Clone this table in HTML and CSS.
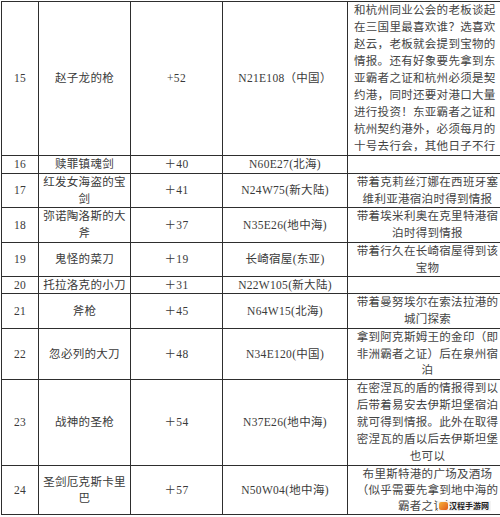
FILE: index.html
```html
<!DOCTYPE html>
<html lang="zh">
<head>
<meta charset="utf-8">
<link rel="stylesheet" href="styles.css">
</head>
<body>
<table class="grid">
  <colgroup>
    <col class="c-no"><col class="c-name"><col class="c-atk"><col class="c-pos"><col class="c-desc">
  </colgroup>
  <tr>
    <td>15</td><td>赵子龙的枪</td><td>+52</td><td>N21E108（中国）</td>
    <td class="desc left">和杭州同业公会的老板谈起<br>在三国里最喜欢谁？选喜欢<br>赵云，老板就会提到宝物的<br>情报。还有好象要先拿到东<br>亚霸者之证和杭州必须是契<br>约港，同时还要对港口大量<br>进行投资！东亚霸者之证和<br>杭州契约港外，必须每月的<br>十号去行会，其他日子不行</td>
  </tr>
  <tr>
    <td>16</td><td>赎罪镇魂剑</td><td>＋40</td><td>N60E27(北海)</td><td class="desc"></td>
  </tr>
  <tr class="tight">
    <td>17</td><td>红发女海盗的宝<br>剑</td><td>＋41</td><td>N24W75(新大陆)</td>
    <td class="desc">带着克莉丝汀娜在西班牙塞<br>维利亚港宿泊时得到情报</td>
  </tr>
  <tr>
    <td>18</td><td>弥诺陶洛斯的大<br>斧</td><td>＋37</td><td>N35E26(地中海)</td>
    <td class="desc">带着埃米利奥在克里特港宿<br>泊时得到情报</td>
  </tr>
  <tr class="tight">
    <td>19</td><td>鬼怪的菜刀</td><td>＋19</td><td>长崎宿屋(东亚)</td>
    <td class="desc">带着行久在长崎宿屋得到该<br>宝物</td>
  </tr>
  <tr class="one">
    <td>20</td><td>托拉洛克的小刀</td><td>＋31</td><td>N22W105(新大陆)</td><td class="desc"></td>
  </tr>
  <tr>
    <td>21</td><td>斧枪</td><td>＋45</td><td>N64W15(北海)</td>
    <td class="desc">带着曼努埃尔在索法拉港的<br>城门探索</td>
  </tr>
  <tr class="tight">
    <td>22</td><td>忽必列的大刀</td><td>＋48</td><td>N34E120(中国)</td>
    <td class="desc">拿到阿克斯姆王的金印（即<br>非洲霸者之证）后在泉州宿<br>泊</td>
  </tr>
  <tr>
    <td>23</td><td>战神的圣枪</td><td>＋54</td><td>N37E26(地中海)</td>
    <td class="desc">在密涅瓦的盾的情报得到以<br>后带着易安去伊斯坦堡宿泊<br>就可得到情报。此外在取得<br>密涅瓦的盾以后去伊斯坦堡<br>也可以</td>
  </tr>
  <tr class="last">
    <td>24</td><td>圣剑厄克斯卡里<br>巴</td><td>＋57</td><td>N50W04(地中海)</td>
    <td class="desc">布里斯特港的广场及酒场<br>（似乎需要先拿到地中海的<br>霸者之证）</td>
  </tr>
</table>
<div class="mark"><span class="mark-icon"></span><span class="mark-text">汉程手游网</span></div>
</body>
</html>
```
FILE: styles.css
```css
html, body {
  margin: 0;
  padding: 0;
  background: #ffffff;
  overflow: hidden;
  width: 500px;
  height: 517px;
}
body {
  position: relative;
  font-family: "Liberation Serif", "Noto Sans CJK SC", serif;
  font-size: 11.5px;
  color: #3a3a3a;
}
.grid {
  border-collapse: collapse;
  table-layout: fixed;
  width: 502px;
  margin: 1px 0 0 1px;
}
.c-no { width: 37px; }
.c-name { width: 92px; }
.c-atk { width: 92px; }
.c-pos { width: 125px; }
.c-desc { width: 156px; }
.grid td {
  border: 1px solid #2e2e2e;
  padding: 0;
  text-align: center;
  vertical-align: middle;
  line-height: 17px;
  letter-spacing: 0.3px;
  white-space: nowrap;
}
.grid td.desc {
  padding: 0 2px 0 6px;
  color: #444;
}
.grid td.left {
  text-align: left;
}
.grid tr.tight td {
  line-height: 16.5px;
}
.grid tr.one td {
  line-height: 16px;
}
.grid tr.last td {
  line-height: 16px;
}
.mark {
  position: absolute;
  left: 438px;
  top: 501px;
  height: 10px;
  display: flex;
  align-items: center;
  gap: 1px;
  background: #f4f4f4;
  padding: 0 2px 0 1px;
}
.mark-icon {
  width: 9px;
  height: 8px;
  border-radius: 2px;
  background: linear-gradient(135deg, #f6b13a, #e05a1c);
}
.mark-text {
  font-family: "Noto Sans CJK SC", sans-serif;
  font-size: 8px;
  line-height: 10px;
  font-weight: bold;
  color: #222;
  letter-spacing: 0;
}
```
